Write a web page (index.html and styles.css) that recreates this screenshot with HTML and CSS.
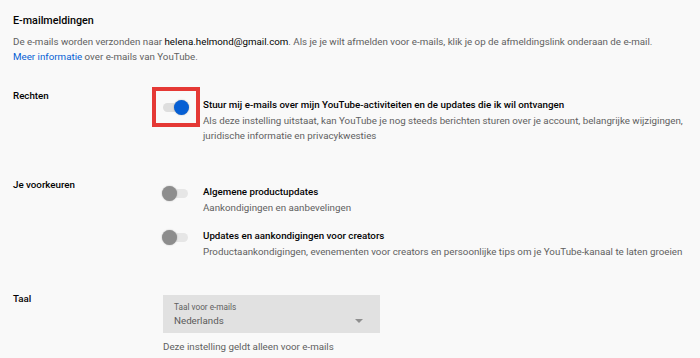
FILE: index.html
```html
<!DOCTYPE html>
<html lang="nl">
<head>
<meta charset="utf-8">
<link rel="stylesheet" href="styles.css">
</head>
<body>
<div class="page">
  <h2 class="title">E-mailmeldingen</h2>
  <p class="intro">De e-mails worden verzonden naar <b>helena.helmond@gmail.com</b>. Als je je wilt afmelden voor e-mails, klik je op de afmeldingslink onderaan de e-mail.<br><a class="link" href="#">Meer informatie</a> over e-mails van YouTube.</p>

  <div class="row row-rights">
    <div class="label">Rechten</div>
    <div class="options">
      <div class="option">
        <div class="toggle-wrap highlighted">
          <span class="toggle on"><span class="knob"></span></span>
        </div>
        <div class="text">
          <div class="opt-title">Stuur mij e-mails over mijn YouTube-activiteiten en de updates die ik wil ontvangen</div>
          <div class="opt-sub">Als deze instelling uitstaat, kan YouTube je nog steeds berichten sturen over je account, belangrijke wijzigingen,<br>juridische informatie en privacykwesties</div>
        </div>
      </div>
    </div>
  </div>

  <div class="row row-prefs">
    <div class="label">Je voorkeuren</div>
    <div class="options">
      <div class="option">
        <div class="toggle-wrap">
          <span class="toggle"><span class="knob"></span></span>
        </div>
        <div class="text">
          <div class="opt-title">Algemene productupdates</div>
          <div class="opt-sub">Aankondigingen en aanbevelingen</div>
        </div>
      </div>
      <div class="option">
        <div class="toggle-wrap">
          <span class="toggle"><span class="knob"></span></span>
        </div>
        <div class="text">
          <div class="opt-title">Updates en aankondigingen voor creators</div>
          <div class="opt-sub">Productaankondigingen, evenementen voor creators en persoonlijke tips om je YouTube-kanaal te laten groeien</div>
        </div>
      </div>
    </div>
  </div>

  <div class="row row-lang">
    <div class="label">Taal</div>
    <div class="options">
      <div class="select">
        <div class="select-label">Taal voor e-mails</div>
        <div class="select-value">Nederlands</div>
        <span class="arrow"></span>
      </div>
      <div class="helper">Deze instelling geldt alleen voor e-mails</div>
    </div>
  </div>
</div>
</body>
</html>
```

FILE: styles.css
```css
html, body {
  margin: 0;
  padding: 0;
  background: #f9f9f9;
}
body {
  font-family: Roboto, "Liberation Sans", Arial, sans-serif;
  color: #030303;
  width: 700px;
  height: 358px;
  overflow: hidden;
}
.page {
  padding: 13px 0 0 13px;
}
.title {
  margin: 0;
  font-size: 10.75px;
  font-weight: 500;
  line-height: 15px;
  color: #030303;
}
.intro {
  margin: 6px 0 0;
  font-size: 9.75px;
  line-height: 15px;
  color: #606060;
  white-space: nowrap;
}
.intro b {
  font-weight: 400;
  color: #030303;
}
.link {
  color: #065fd4;
  text-decoration: none;
}
.row {
  display: grid;
  grid-template-columns: 150px 1fr;
}
.row-rights {
  margin-top: 24px;
}
.row-prefs {
  margin-top: 34px;
}
.row-lang {
  margin-top: 32px;
}
.label {
  font-size: 9.75px;
  font-weight: 500;
  line-height: 15px;
  color: #030303;
}
.options {
  display: flex;
  flex-direction: column;
}
.row-prefs .options {
  padding-top: 7.5px;
  gap: 13px;
}
.option {
  display: flex;
  align-items: flex-start;
}
.toggle-wrap {
  width: 40px;
  height: 15px;
  margin-top: 2px;
  flex: none;
  display: flex;
  align-items: center;
}
.toggle-wrap.highlighted {
  box-sizing: border-box;
  width: 48px;
  height: 40px;
  margin: -1px 3px 0 -11px;
  border: 4px solid #e53935;
  padding-left: 7px;
}
.row-rights .text {
  padding-top: 8.5px;
}
.toggle {
  position: relative;
  display: block;
  width: 25px;
  height: 9px;
  border-radius: 5px;
  background: #e6e6e6;
}
.toggle .knob {
  position: absolute;
  top: -3px;
  left: -1px;
  width: 15px;
  height: 15px;
  border-radius: 50%;
  background: #8d8d8d;
  box-shadow: 0 0 1.5px rgba(0,0,0,0.35);
}
.toggle.on {
  background: #dedede;
}
.toggle.on .knob {
  left: 11px;
  background: #065fd4;
}
.opt-title {
  font-size: 9.75px;
  font-weight: 500;
  line-height: 15px;
  color: #030303;
}
.opt-sub {
  margin-top: 1px;
  font-size: 9.75px;
  line-height: 15px;
  color: #606060;
}
.select {
  position: relative;
  width: 217px;
  height: 38px;
  box-sizing: border-box;
  background: #e1e1e1;
  padding: 7px 0 0 11px;
  margin-top: 3.5px;
}
.select-label {
  font-size: 8.25px;
  line-height: 11px;
  color: #606060;
}
.select-value {
  font-size: 9.75px;
  line-height: 15px;
  color: #5a5a5a;
  margin-top: 0.5px;
}
.arrow {
  position: absolute;
  right: 17px;
  top: 24px;
  width: 0;
  height: 0;
  border-left: 4px solid transparent;
  border-right: 4px solid transparent;
  border-top: 4px solid #8f8f8f;
}
.helper {
  margin-top: 6px;
  font-size: 9.75px;
  line-height: 15px;
  color: #606060;
}
```
